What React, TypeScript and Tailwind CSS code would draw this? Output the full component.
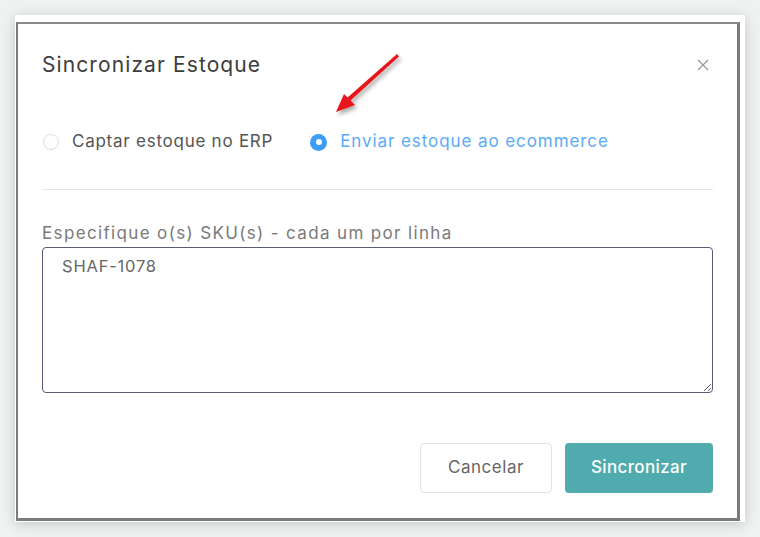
import React from "react";

export default function App() {
  const font = { fontFamily: "Inter, 'Noto Sans', sans-serif" };
  return (
    <div className="w-[760px] h-[537px] bg-[#eef2f1] relative overflow-hidden" style={font}>
      <div className="absolute left-[15px] top-[15px] w-[730px] h-[507px] bg-white shadow-[0_2px_12px_rgba(0,0,0,0.18)] pt-[7px] pl-[1px] pr-[5px] pb-[1px] flex">
        <div className="flex-1 border-l-2 border-t-2 border-r-[3px] border-b-[3px] border-[#7b7b7b] border-t-[#8a8a8a] flex flex-col px-[24px]">
          <div className="h-[81px] flex items-center justify-between">
            <div className="text-[21px] text-[#3d3d3d] tracking-[1.1px]">Sincronizar Estoque</div>
            <svg width="12" height="12" viewBox="0 0 12 12" className="mr-[4px]">
              <path d="M1 1 L11 11 M11 1 L1 11" stroke="#9a9a9a" strokeWidth="1.3" />
            </svg>
          </div>
          <div className="h-[73px] flex items-center pt-[1px]">
            <div className="flex items-center">
              <span className="w-[16px] h-[16px] rounded-full border border-[#dcdde3] bg-white ml-[1px]" />
              <span className="ml-[13px] text-[17px] text-[#555] tracking-[0.75px]">Captar estoque no ERP</span>
            </div>
            <div className="flex items-center ml-[37px]">
              <span className="w-[17px] h-[17px] rounded-full bg-[#3d9cf6] flex items-center justify-center">
                <span className="w-[6px] h-[6px] rounded-full bg-white" />
              </span>
              <span className="ml-[13px] text-[17px] text-[#5aabf6] tracking-[0.92px]">Enviar estoque ao ecommerce</span>
            </div>
          </div>
          <div className="mt-[11px] h-px bg-[#e3e5eb]" />
          <div className="mt-[32px] h-[24px] flex items-center text-[17px] text-[#7a7a7a] tracking-[1.35px]">
            Especifique o(s) SKU(s) - cada um por linha
          </div>
          <textarea
            readOnly
            defaultValue="SHAF-1078"
            className="mt-[1px] h-[146px] w-full border border-[#565c78] rounded-[4px] px-[19px] py-[6px] text-[16.5px] text-[#666] tracking-[0.8px] outline-none resize-y"
            style={font}
          />
          <div className="mt-[50px] flex justify-end gap-[13px]">
            <button className="w-[132px] h-[50px] rounded-[4px] border border-[#e1e2ea] bg-white text-[17px] text-[#666] tracking-[0.55px]">
              Cancelar
            </button>
            <button className="w-[148px] h-[50px] rounded-[4px] bg-[#4fabad] text-[17px] text-white font-medium tracking-[0.35px]">
              Sincronizar
            </button>
          </div>
        </div>
      </div>
      <svg className="absolute left-0 top-0 pointer-events-none" width="760" height="537" viewBox="0 0 760 537">
        <defs>
          <filter id="sh" x="-50%" y="-50%" width="200%" height="200%">
            <feDropShadow dx="2" dy="3" stdDeviation="2" floodColor="#000" floodOpacity="0.35" />
          </filter>
        </defs>
        <g filter="url(#sh)" fill="#e8191a">
          <polygon points="397,54 399,56.5 350,101 347,98" />
          <polygon points="336,112 344,94 355,105" />
        </g>
      </svg>
    </div>
  );
}
